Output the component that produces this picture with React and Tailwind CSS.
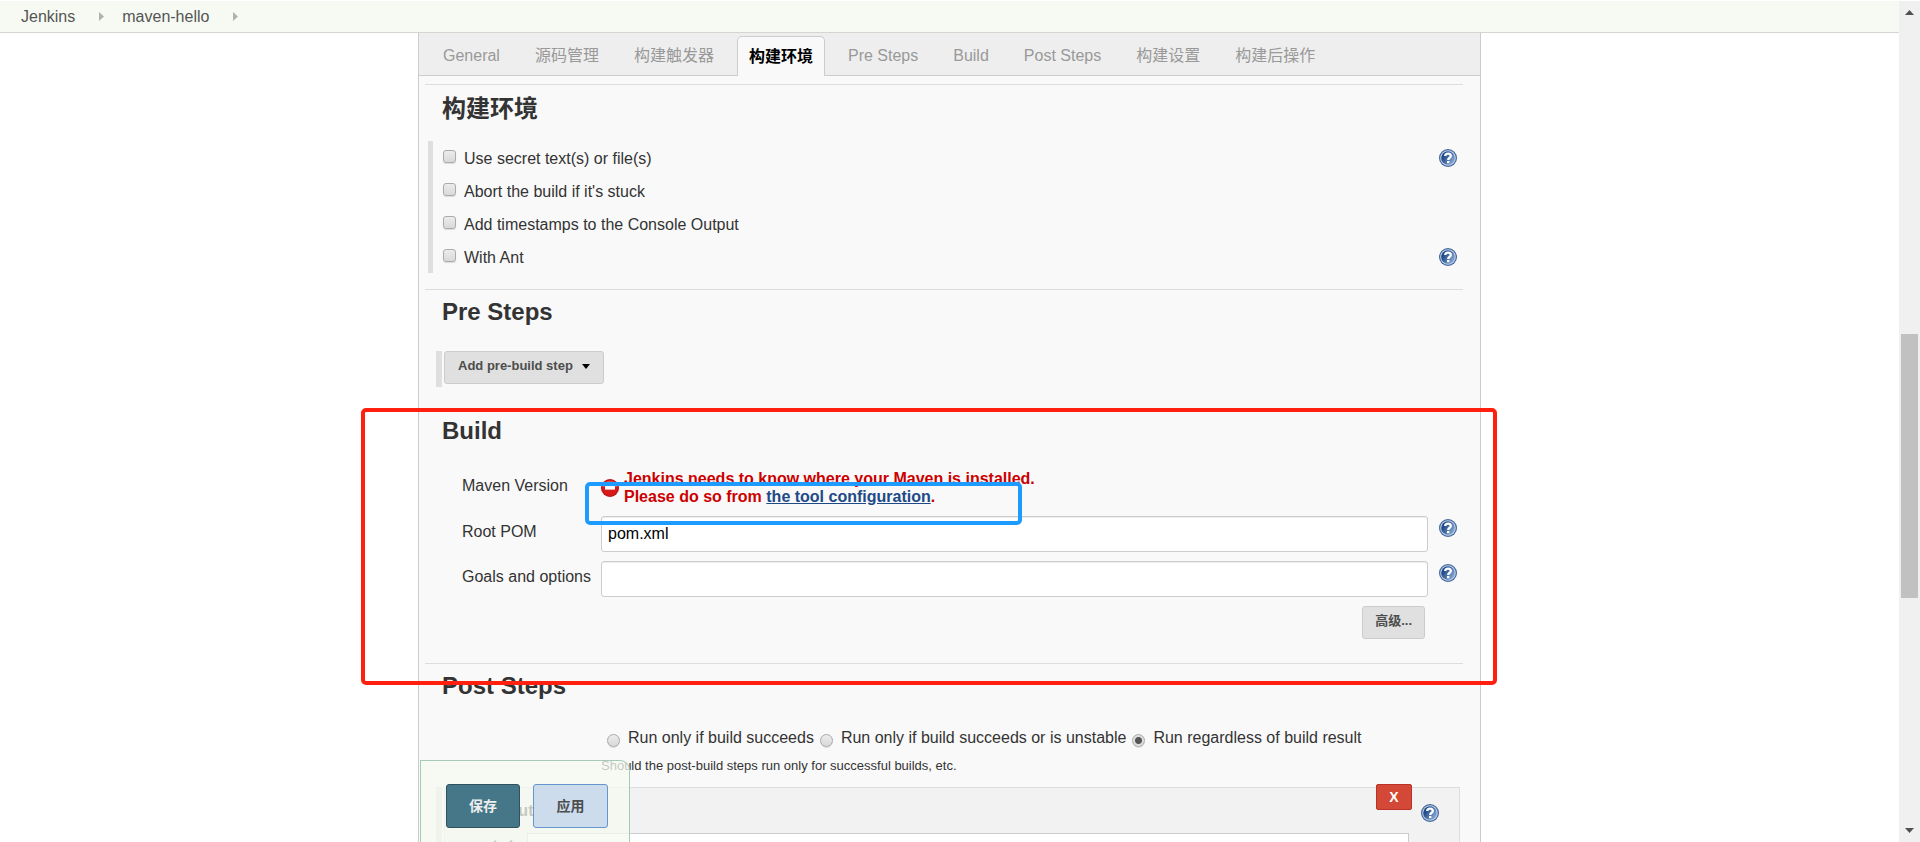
import { useId } from "react";

function HelpIcon() {
  const id = useId();
  return (
    <svg viewBox="0 0 18 18" className="block size-[18px]" aria-hidden="true">
      <defs>
        <linearGradient id={id} x1="0" y1="0.2" x2="1" y2="0.8">
          <stop offset="0.2" stopColor="#204a87" />
          <stop offset="1" stopColor="#8fb0da" />
        </linearGradient>
      </defs>
      <circle cx="9" cy="9" r="9" fill="#3f659e" />
      <circle cx="9" cy="9" r="7.8" fill="#c3d2e8" />
      <circle cx="9" cy="9" r="6.8" fill={`url(#${id})`} />
      <path d="M6.2 7C6.3 3.7 11.8 3.8 11.8 6.9C11.8 8.8 9.2 8.7 9.2 11" fill="none" stroke="#fff" strokeWidth="2.3" />
      <rect x="8" y="12" width="2.4" height="2.2" fill="#fff" />
    </svg>
  );
}

function Help({ label }) {
  return (
    <a href="#help" aria-label={`Help for feature: ${label}`} className="block shrink-0">
      <HelpIcon />
    </a>
  );
}

function ErrorIcon() {
  return (
    <svg viewBox="0 0 18 18" className="block size-[18px] shrink-0" aria-hidden="true">
      <circle cx="9" cy="9" r="9" fill="#b50d0d" />
      <circle cx="9" cy="9" r="8" fill="#d81a1a" />
      <path d="M1.2 8A8 8 0 0 1 16.8 8Z" fill="#e04a45" />
      <rect x="4" y="6" width="10" height="4.6" fill="#fff" />
    </svg>
  );
}

function CrumbArrow() {
  return (
    <svg viewBox="0 0 5 9" className="h-[9px] w-[5px]" aria-hidden="true">
      <path d="M0 0L5 4.5L0 9Z" fill="#b0b2ad" />
    </svg>
  );
}

const tabs = ["General", "源码管理", "构建触发器", "构建环境", "Pre Steps", "Build", "Post Steps", "构建设置", "构建后操作"];
const activeTab = "构建环境";

const wrappers = [
  { label: "Use secret text(s) or file(s)", help: true },
  { label: "Abort the build if it's stuck", help: false },
  { label: "Add timestamps to the Console Output", help: false },
  { label: "With Ant", help: true },
];

const conditions = ["Run only if build succeeds", "Run only if build succeeds or is unstable", "Run regardless of build result"];

const choice =
  "size-[13px] shrink-0 appearance-none border border-[#ababab] bg-linear-to-b from-[#ececec] to-[#d9d9d9] shadow-[0_1px_1px_rgba(0,0,0,0.12)]";

function SectionTitle({ children }) {
  return <h2 className="pl-[17px] text-2xl leading-[34px] font-bold text-[#333]">{children}</h2>;
}

function TextRow({ id, label, value }) {
  return (
    <div className="flex h-[45px] items-start">
      <label htmlFor={id} className="w-[139px] pt-[6px] leading-5">
        {label}
      </label>
      <input
        id={id}
        type="text"
        defaultValue={value}
        className="h-9 min-w-0 flex-1 rounded-[3px] border border-[#ccc] bg-white px-[6px] text-base text-black shadow-[inset_0_1px_1px_rgba(0,0,0,0.075)] outline-none"
      />
      <div className="pt-[3px] pr-[6px] pl-[11px]">
        <Help label={label} />
      </div>
    </div>
  );
}

export default function App() {
  return (
    <div className="flex h-screen overflow-hidden bg-white font-['Liberation_Sans','Noto_Sans_CJK_SC',sans-serif] text-base text-[#333]">
      <div className="flex min-w-0 flex-1 flex-col">
        <nav aria-label="Breadcrumb" className="mt-px flex h-8 shrink-0 items-center border-b border-[#d3d7cf] bg-[#f6faf2] pl-[21px] leading-5 text-[#555]">
          <a href="#jenkins">Jenkins</a>
          <span className="pr-[18px] pl-6"><CrumbArrow /></span>
          <a href="#maven-hello">maven-hello</a>
          <span className="pl-6"><CrumbArrow /></span>
        </nav>

        <main className="relative mx-auto min-h-0 w-full max-w-[1063px] flex-1 border-x border-[#ccc] bg-[#f9f9f9]">
          <div role="tablist" className="flex h-[43px] items-end gap-[11px] border-b border-[#ccc] bg-[#eee] pl-3">
            {tabs.map((tab) => (
              <button
                key={tab}
                type="button"
                role="tab"
                aria-selected={tab === activeTab}
                className={
                  tab === activeTab
                    ? "-mb-px h-10 rounded-t-[5px] border border-b-0 border-[#ccc] bg-[#f9f9f9] px-[11px] font-bold text-black"
                    : "-mb-px h-10 border border-transparent px-[11px] text-[#999]"
                }
              >
                {tab}
              </button>
            ))}
          </div>

          <form className="pt-2 pr-[17px] pl-[6px]" onSubmit={(e) => e.preventDefault()}>
            <section className="h-[205px] border-t border-[#ddd] pt-[7px]">
              <SectionTitle>构建环境</SectionTitle>
              <ul className="mt-[15px] ml-[3px] border-l-[5px] border-[#dfdfdf]">
                {wrappers.map(({ label, help }) => (
                  <li key={label} className="flex h-[33px] items-center justify-between pr-[6px] pl-[10px]">
                    <label className="flex items-start gap-2 pt-[2px] leading-5">
                      <input type="checkbox" className={`${choice} mt-px rounded-[3px]`} />
                      {label}
                    </label>
                    {help && <Help label={label} />}
                  </li>
                ))}
              </ul>
            </section>

            <section className="h-[119px] border-t border-[#ddd] pt-[5px]">
              <SectionTitle>Pre Steps</SectionTitle>
              <div className="mt-[22px] ml-[11px] flex h-9 items-start border-l-[6px] border-[#dfdfdf] pl-[2px]">
                <button type="button" className="flex h-[33px] items-center gap-[9px] rounded-[3px] border border-[#ccc] bg-[#e0e0e0] px-[13px] pb-[3px] text-[13px] font-bold text-[#4d4d4d]">
                  Add pre-build step
                  <svg viewBox="0 0 8 5" className="h-[5px] w-2" aria-hidden="true">
                    <path d="M0 0H8L4 5Z" fill="#000" />
                  </svg>
                </button>
              </div>
            </section>

            <section className="h-[255px] pt-[6px]">
              <SectionTitle>Build</SectionTitle>
              <div className="mt-[22px] pl-[37px]">
                <div className="flex h-[46px] items-start">
                  <span className="w-[139px] pt-[6px] leading-5">Maven Version</span>
                  <div className="flex gap-[5px] font-bold text-[#c00]">
                    <div className="pt-[9px]"><ErrorIcon /></div>
                    <p className="leading-[18px]">
                      Jenkins needs to know where your Maven is installed.
                      <br />
                      Please do so from{" "}
                      <a href="#configureTools" className="text-[#204a87] underline">the tool configuration</a>.
                    </p>
                  </div>
                </div>
                <TextRow id="root-pom" label="Root POM" value="pom.xml" />
                <TextRow id="goals" label="Goals and options" value="" />
                <div className="flex justify-end pr-[38px]">
                  <button type="button" className="h-[33px] rounded-[3px] border border-[#ccc] bg-[#e0e0e0] px-3 pb-[3px] text-[13px] font-bold text-[#4d4d4d]">
                    高级...
                  </button>
                </div>
              </div>
            </section>

            <section className="border-t border-[#ddd] pt-[5px]">
              <SectionTitle>Post Steps</SectionTitle>
              <div className="mt-[25px] flex gap-[6px] pl-[182px]">
                {conditions.map((label, i) => (
                  <label key={label} className="flex items-start gap-2 leading-5">
                    <input
                      type="radio"
                      name="post-steps"
                      defaultChecked={i === 2}
                      className={`${choice} mt-[6px] rounded-full checked:bg-[radial-gradient(circle,#555_3px,#dedede_4px)]`}
                    />
                    {label}
                  </label>
                ))}
              </div>
              <p className="mt-[10px] pl-[176px] text-[13px] leading-4">Should the post-build steps run only for successful builds, etc.</p>
              <div className="mt-[13px] mr-[3px] ml-[11px] border-l-[6px] border-[#dfdfdf] pl-[2px]">
                <div className="h-40 border border-[#ddd] bg-[#f2f2f2] pl-9">
                  <div className="flex h-[45px] items-start">
                    <h3 className="flex-1 pt-[13px] leading-5 font-bold">Execute shell</h3>
                    <button type="button" aria-label="Delete" className="-mt-1 h-[26px] w-9 rounded-[2px] border border-[#b83325] bg-[#d34836] text-sm font-bold text-white">
                      X
                    </button>
                    <div className="pt-4 pr-5 pl-[9px]"><Help label="Execute shell" /></div>
                  </div>
                  <div className="flex items-start pr-[50px]">
                    <label htmlFor="command" className="w-[46px] pt-[6px] pl-[6px] leading-5">命令</label>
                    <textarea id="command" className="h-24 min-w-0 flex-1 resize-none border border-[#ccc] bg-white" />
                  </div>
                </div>
              </div>
            </section>
          </form>

          <div className="absolute bottom-0 left-px flex h-[82px] items-start gap-[13px] rounded-tr-[10px] border border-b-0 border-[#a5cbb5] bg-[#f6faf0]/75 pt-[23px] pr-[21px] pl-[25px]">
            <button type="button" className="h-11 w-[74px] rounded-[3px] border border-[#30525f] bg-[#457788] text-sm font-bold text-[#eee]">保存</button>
            <button type="button" className="h-11 w-[75px] rounded-[3px] border border-[#6596cf] bg-[#ccdced] text-sm font-bold text-[#4d4d4d]">应用</button>
          </div>

          <div aria-hidden="true" className="pointer-events-none absolute top-[375px] -right-[17px] -left-[58px] h-[277px] rounded-[5px] border-4 border-[#ff2010]" />
          <div aria-hidden="true" className="pointer-events-none absolute top-[449px] left-[166px] h-[43px] w-[437px] rounded-[5px] border-4 border-[#1e9bff]" />
        </main>
      </div>

      <div aria-hidden="true" className="mt-px flex w-[21px] shrink-0 flex-col items-center bg-[#f0f0f0] pt-[9px] pb-[9px]">
        <svg viewBox="0 0 9 5" className="h-[5px] w-[9px]"><path d="M4.5 0L9 5H0Z" fill="#505050" /></svg>
        <div className="mt-[319px] h-[264px] w-[17px] bg-[#c1c1c1]" />
        <svg viewBox="0 0 9 5" className="mt-auto h-[5px] w-[9px]"><path d="M0 0H9L4.5 5Z" fill="#505050" /></svg>
      </div>
    </div>
  );
}
